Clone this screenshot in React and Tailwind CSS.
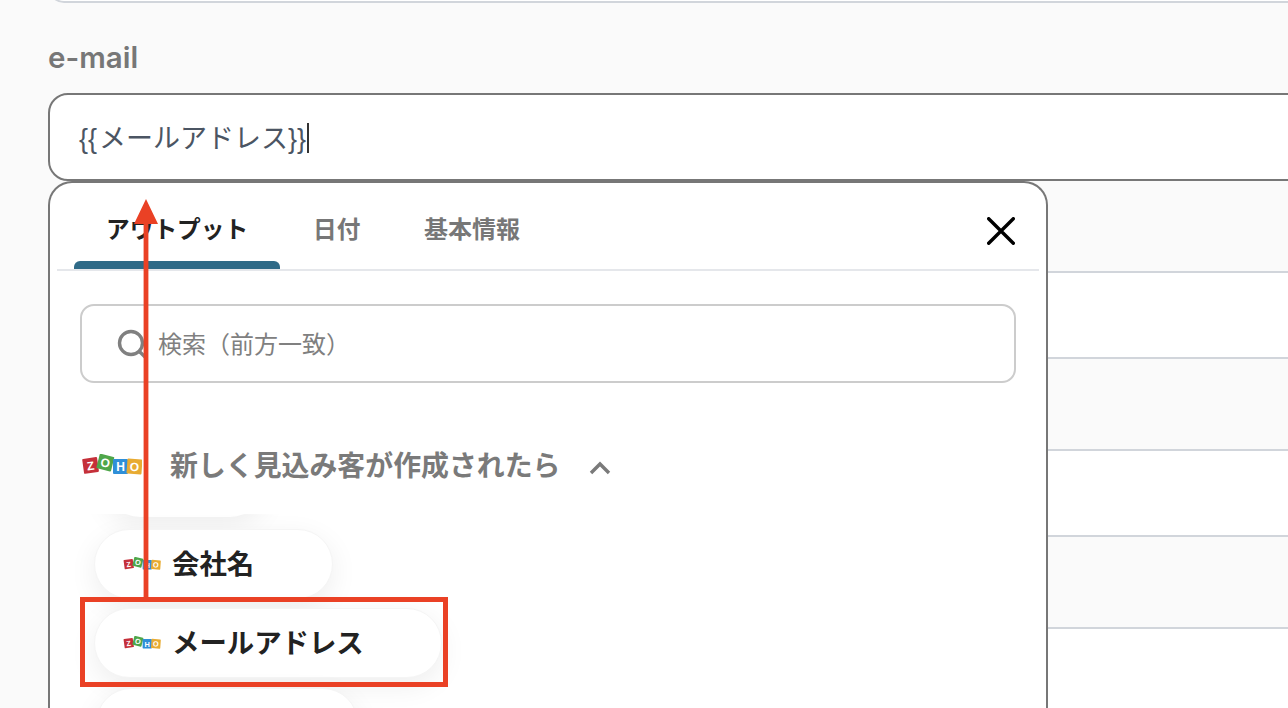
const FONT = "font-['Inter','Noto_Sans_CJK_JP',sans-serif]";

function Zoho({ className }) {
  const tiles = [
    { x: 1, y: 4, c: "#c5303a", l: "Z", r: -8 },
    { x: 16, y: 1, c: "#4fa64a", l: "O", r: 14 },
    { x: 31, y: 5, c: "#2f8fd8", l: "H", r: 0 },
    { x: 45, y: 5, c: "#e8ab32", l: "O", r: 4 },
  ];
  return (
    <svg viewBox="0 0 60 21" className={className}>
      {tiles.map((t, i) => (
        <g key={i} transform={`rotate(${t.r} ${t.x + 7} ${t.y + 7})`}>
          <rect x={t.x} y={t.y} width="15" height="15" rx="1" fill={t.c} />
          <text x={t.x + 7.5} y={t.y + 12} textAnchor="middle" fontSize="12" fontWeight="800" fill="#fff" fontFamily="Liberation Sans, sans-serif">{t.l}</text>
        </g>
      ))}
    </svg>
  );
}

function Pill({ label, className }) {
  return (
    <div className={`flex h-[70px] items-center rounded-full bg-white border border-[#f5f5f5] pl-[28px] shadow-[0_8px_28px_rgba(0,0,0,0.07)] ${className}`}>
      {label && <Zoho className="mb-[2px] h-[13px] w-[38px] shrink-0" />}
      {label && <span className="ml-[11px] pt-[1px] text-[27.4px] font-bold leading-none text-[#222]">{label}</span>}
    </div>
  );
}

export default function App() {
  return (
    <div className={`relative h-[708px] w-[1288px] overflow-hidden bg-[#fafafa] pl-12 ${FONT}`}>
      <div className="-mt-[20px] h-[23px] w-[1300px] rounded-b-2xl border-2 border-t-0 border-[#d1d5db] bg-white" />
      <div className="mt-[37px] text-[29.5px] font-semibold leading-[34px] text-[#777]">e-mail</div>
      <div className="mt-[19px] flex h-[88px] w-[1300px] items-center rounded-[20px] border-2 border-[#777] bg-white pl-[29px] text-[27px] text-[#4b5563]">
        <span className="pt-[4px] font-['Liberation_Sans',sans-serif]">{"{{"}</span>
        <span className="ml-[2px] pt-[4px]">メールアドレス</span>
        <span className="pt-[4px] font-['Liberation_Sans',sans-serif]">{"}}"}</span>
        <span className="ml-[1px] mt-[2px] h-[30px] w-[1.5px] bg-[#333]" />
      </div>
      <div className="flex">
        <div className="relative z-10 h-[600px] w-[1000px] shrink-0 rounded-t-[24px] border-2 border-b-0 border-[#777] bg-white">
          <div className="relative mx-[7px] flex h-[88px] items-center border-b-2 border-[#e5e7eb] pl-[49px] pt-[8px] text-[23.7px] font-bold">
            <span className="w-[207px] text-[#222]">アウトプット</span>
            <span className="w-[111px] text-[#777]">日付</span>
            <span className="text-[24px] text-[#777]">基本情報</span>
            <span className="absolute bottom-0 left-[17px] h-[8px] w-[206px] rounded-t-md bg-[#2f6a87]" />
            <svg viewBox="0 0 28 28" className="absolute right-[24px] top-[34px] h-[28px] w-[28px]">
              <path d="M1.7 1.7 26.3 26.3M26.3 1.7 1.7 26.3" stroke="#000" strokeWidth="3.4" strokeLinecap="round" />
            </svg>
          </div>
          <div className="mx-[30px] mt-[33px] flex h-[79px] w-[936px] items-center rounded-[14px] border-2 border-[#ccc] bg-white pl-[34px] pt-[2px] text-[24px] text-[#808080] [text-spacing-trim:space-all]">
            <svg viewBox="0 0 32 32" className="mb-[2px] h-[32px] w-[32px] shrink-0">
              <circle cx="15" cy="15" r="11.5" fill="none" stroke="#808080" strokeWidth="3.4" />
              <path d="M24 24 30 30" stroke="#808080" strokeWidth="3.4" strokeLinecap="round" />
            </svg>
            <span className="ml-[10px] [font-feature-settings:'chws'_0]">検索（前方一致）</span>
          </div>
          <div className="ml-[32px] mt-[71px] flex h-[24px] items-center">
            <Zoho className="mb-[4px] h-[21px] w-[60px] shrink-0" />
            <span className="ml-[28px] pt-[2px] text-[27.9px] font-bold leading-none text-[#7a7a7a]">新しく見込み客が作成されたら</span>
            <svg viewBox="0 0 22 14" className="ml-[29px] mt-[4px] h-[14px] w-[22px]">
              <path d="M2 12 11 3 20 12" fill="none" stroke="#7a7a7a" strokeWidth="3.4" />
            </svg>
          </div>
          <div className="mt-[36px] h-[300px] overflow-hidden pl-[44px]">
            <div className="-mt-[67px] flex flex-col items-start gap-[9px]">
              <div className="ml-[11px] h-[70px] w-[160px] rounded-full bg-white shadow-[0_8px_28px_rgba(0,0,0,0.07)]" />
              <Pill label="会社名" className="mt-[3px] w-[239px]" />
              <Pill label="メールアドレス" className="w-[348px]" />
              <Pill label="" className="ml-[2px] mt-[1px] w-[262px]" />
            </div>
          </div>
        </div>
        <div className="flex-1">
          <div className="h-[92px] border-b-2 border-[#d1d5db]" />
          <div className="h-[86px] border-b-2 border-[#d1d5db] bg-white" />
          <div className="h-[92px] border-b-2 border-[#d1d5db]" />
          <div className="h-[86px] border-b-2 border-[#d1d5db] bg-white" />
          <div className="h-[92px] border-b-2 border-[#d1d5db]" />
          <div className="h-[90px] bg-white" />
        </div>
      </div>
      <div className="absolute left-[80px] top-[597px] z-20 h-[90px] w-[368px] border-[5px] border-[#ea4125]" />
      <svg viewBox="0 0 24 400" className="absolute left-[134px] top-[198px] z-20 h-[400px] w-[24px]">
        <path d="M12 1 24 26H14.4V400H9.6V26H0Z" fill="#ea4125" />
      </svg>
    </div>
  );
}
